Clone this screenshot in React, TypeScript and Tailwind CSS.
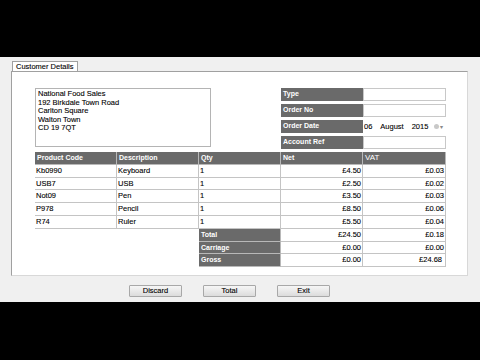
import React from 'react';

type Line = { code: string; desc: string; qty: string; net: string; vat: string };

const lines: Line[] = [
  { code: 'Kb0990', desc: 'Keyboard', qty: '1', net: '£4.50', vat: '£0.03' },
  { code: 'USB7', desc: 'USB', qty: '1', net: '£2.50', vat: '£0.02' },
  { code: 'Not09', desc: 'Pen', qty: '1', net: '£3.50', vat: '£0.03' },
  { code: 'P978', desc: 'Pencil', qty: '1', net: '£8.50', vat: '£0.06' },
  { code: 'R74', desc: 'Ruler', qty: '1', net: '£5.50', vat: '£0.04' },
];

const totals = [
  { label: 'Total', net: '£24.50', vat: '£0.18' },
  { label: 'Carriage', net: '£0.00', vat: '£0.00' },
  { label: 'Gross', net: '£0.00', vat: '£24.68' },
];

// slightly heavier look of the old WinForms text
const heavy = '[-webkit-text-stroke:0.1px_currentColor]';
const headCell = 'h-[12.8px] bg-[#6a6a6a] text-white text-[7px] font-bold px-[2px] leading-[11px] border-r border-b border-[#b8b8b8]';
const cell = `h-[12.8px] bg-white px-[1px] leading-[11.5px] border-r border-b border-[#c4c4c4] ${heavy}`;

const Field = ({ label, children }: { label: string; children?: React.ReactNode }) => (
  <div className="flex h-[13px]">
    <div className="w-[82px] bg-[#6a6a6a] text-white text-[7px] font-bold px-[2px] leading-[12px]">{label}</div>
    {children ?? <div className="w-[83px] bg-white border border-[#c8c8c8]" />}
  </div>
);

const Button = ({ label }: { label: string }) => (
  <button className={`w-[53px] h-[12px] text-[7.5px] leading-[10px] text-black border border-[#a8a8a8] bg-gradient-to-b from-[#f6f6f6] to-[#dcdcdc] rounded-[1px] ${heavy}`}>
    {label}
  </button>
);

export default function App() {
  return (
    <div className="w-[480px] h-[360px] bg-black flex flex-col text-[7.5px] text-black" style={{ fontFamily: '"Liberation Sans", Arial, sans-serif' }}>
      <div className="h-[57px]" />
      <div className="h-[245px] bg-[#f0f0f0] flex flex-col">
        <div className="pl-[12px] pt-[4px] flex">
          <div className={`h-[10px] px-[3px] bg-white border border-b-0 border-[#a0a0a0] leading-[9px] ${heavy}`}>Customer Details</div>
        </div>
        <div className="ml-[11px] w-[457px] h-[205px] bg-white border border-[#a0a0a0] border-r-[#d8d8d8] border-b-[#d8d8d8] pl-[23px] pt-[16px]">
          <div className="flex">
            <div className={`w-[176px] h-[59px] border border-[#b4b4b4] px-[2px] pt-[1px] leading-[8.6px] ${heavy}`}>
              <div>National Food Sales</div>
              <div>192 Birkdale Town Road</div>
              <div>Carlton Square</div>
              <div>Walton Town</div>
              <div>CD 19 7QT</div>
            </div>
            <div className="ml-[70px] flex flex-col gap-[3px]">
              <Field label="Type" />
              <Field label="Order No" />
              <Field label="Order Date">
                <div className={`w-[83px] flex items-center pl-[1px] leading-[12px] ${heavy}`}>
                  <span>06</span>
                  <span className="ml-[8px]">August</span>
                  <span className="ml-[8px]">2015</span>
                  <span className="ml-[6px] w-[5px] h-[5px] rounded-full bg-[#c8c8c8]" />
                  <span className="ml-[1px] text-[#888] text-[6px]">▾</span>
                </div>
              </Field>
              <Field label="Account Ref" />
            </div>
          </div>
          <div className="mt-[3px] grid grid-cols-[82px_82px_82px_82px_83px] w-[411px]">
            <div className={headCell}>Product Code</div>
            <div className={headCell}>Description</div>
            <div className={headCell}>Qty</div>
            <div className={headCell}>Net</div>
            <div className={headCell + ' font-normal text-[8px]'}>VAT</div>
            {lines.map((l) => (
              <React.Fragment key={l.code}>
                <div className={cell}>{l.code}</div>
                <div className={cell}>{l.desc}</div>
                <div className={cell}>{l.qty}</div>
                <div className={cell + ' text-right'}>{l.net}</div>
                <div className={cell + ' text-right'}>{l.vat}</div>
              </React.Fragment>
            ))}
            {totals.map((t) => (
              <React.Fragment key={t.label}>
                <div className="h-[12.8px]" />
                <div className="h-[12.8px]" />
                <div className={headCell}>{t.label}</div>
                <div className={cell + ' text-right'}>{t.net}</div>
                <div className={cell + ' text-right' + (t.label === 'Gross' ? ' pr-[3px]' : '')}>{t.vat}</div>
              </React.Fragment>
            ))}
          </div>
        </div>
        <div className="flex pl-[129px] gap-[21px] mt-[9px]">
          <Button label="Discard" />
          <Button label="Total" />
          <Button label="Exit" />
        </div>
      </div>
    </div>
  );
}
